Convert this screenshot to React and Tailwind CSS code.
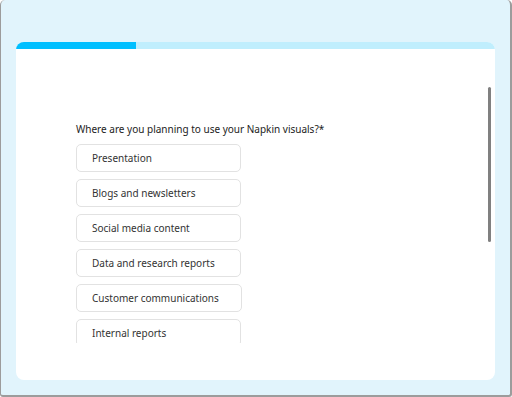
import React from "react";

const options = [
  "Presentation",
  "Blogs and newsletters",
  "Social media content",
  "Data and research reports",
  "Customer communications",
  "Internal reports",
];

export default function App() {
  return (
    <div className="w-[512px] h-[397px] bg-[#e1f4fc] border-l border-r-2 border-b-2 border-[#9c9c9c] rounded-t-[5px] rounded-b-[3px] pt-[42px] px-[15px] pb-[13px] font-['Noto_Sans',sans-serif]">
      <div className="relative h-[338px] bg-white rounded-lg overflow-hidden flex flex-col">
        <div className="h-[7px] bg-[#c0eefd] shrink-0">
          <div className="h-full w-[120px] bg-[#00bfff]" />
        </div>
        <div className="h-[294px] overflow-hidden pt-[72px] pl-[60px]">
          <p className="text-[10px] leading-[16px] text-[#222] mb-[7px]">
            Where are you planning to use your Napkin visuals?*
          </p>
          <div className="flex flex-col items-start gap-[7px]">
            {options.map(o => (
              <button
                key={o}
                className="h-[28px] min-w-[165px] pl-[15px] pr-[22px] flex items-center text-left text-[10px] text-[#333] border border-[#e2e2e2] rounded-[5px] bg-white"
              >
                {o}
              </button>
            ))}
          </div>
        </div>
        <div className="absolute right-[4px] top-[45px] w-[3px] h-[155px] rounded-full bg-[#808080]" />
      </div>
    </div>
  );
}
